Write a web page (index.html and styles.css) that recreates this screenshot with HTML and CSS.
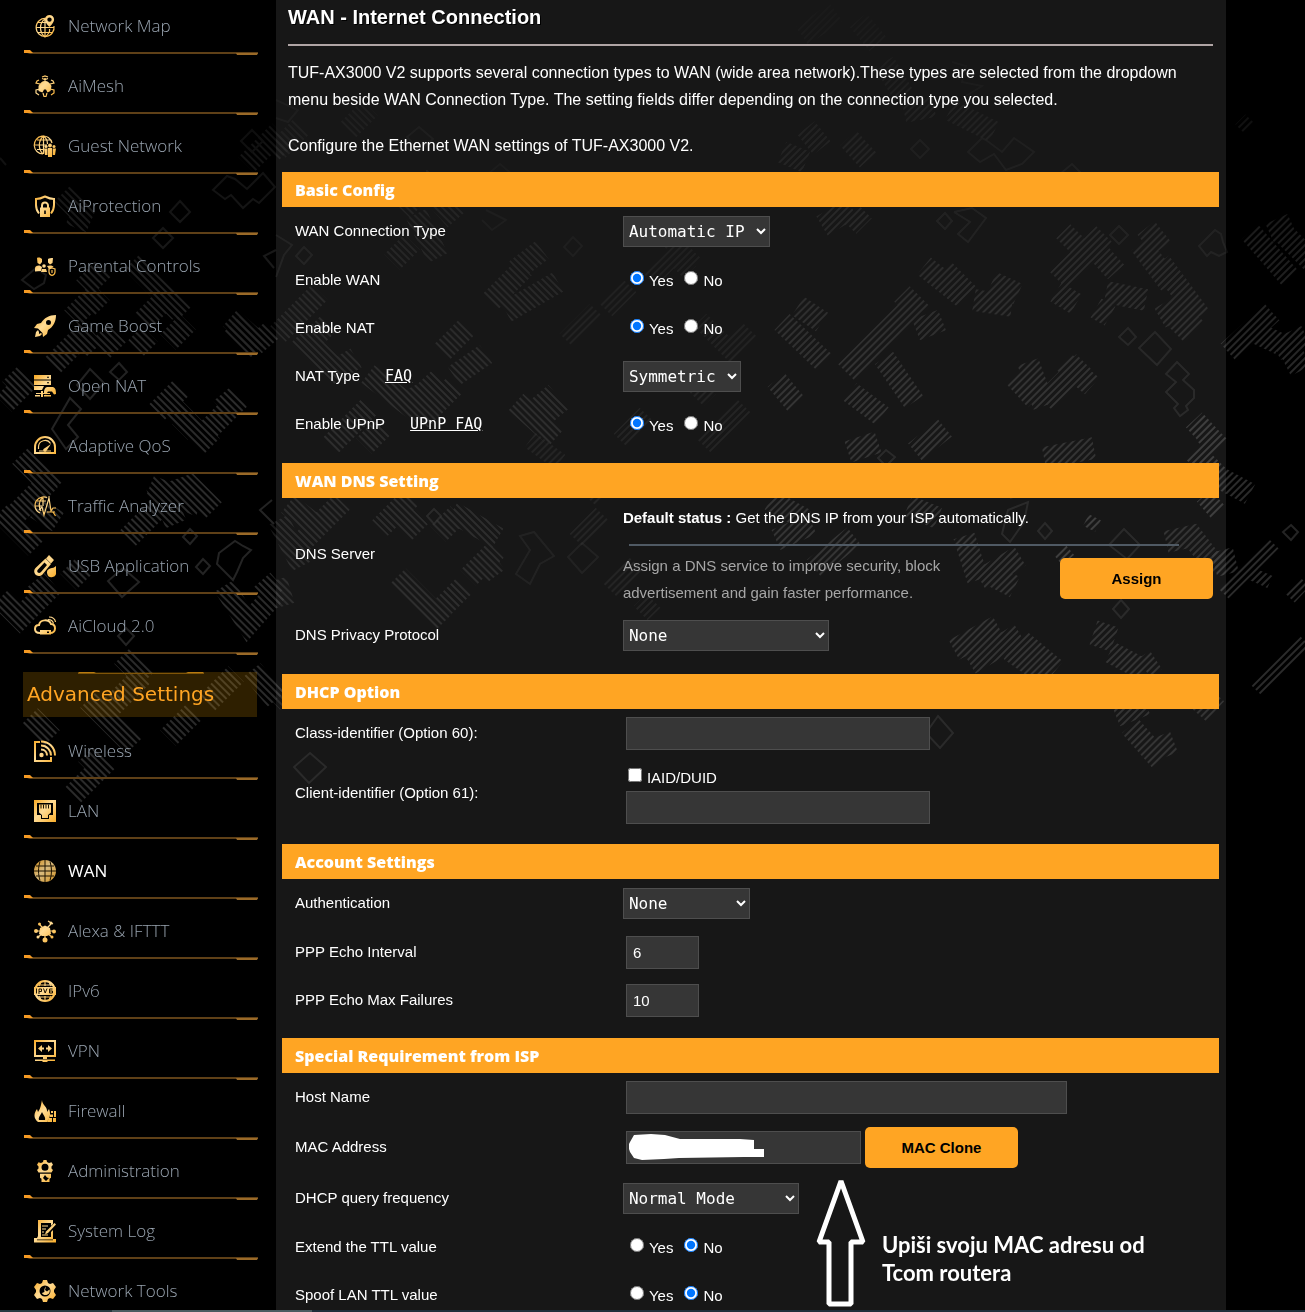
FILE: index.html
```html
<!DOCTYPE html>
<html lang="en">
<head>
  <meta charset="UTF-8">
  <title>ASUS Wireless Router TUF-AX3000 V2 - Internet Connection</title>
  <link rel="stylesheet" href="styles.css">
</head>
<body>
  <!-- camo background + shared icon gradient -->
  <svg class="camo" width="1305" height="1312" aria-hidden="true">
    <defs>
      <linearGradient id="gold" gradientUnits="userSpaceOnUse" x1="0" y1="0" x2="22" y2="22">
        <stop offset="0" stop-color="#f7a823"/>
        <stop offset="0.45" stop-color="#ffdc96"/>
        <stop offset="1" stop-color="#f9ae2b"/>
      </linearGradient>
      <pattern id="back" width="5" height="5" patternUnits="userSpaceOnUse" patternTransform="rotate(-45)">
        <rect width="2" height="5" fill="#2b2b2b"/>
      </pattern>
      <pattern id="fwd" width="5" height="5" patternUnits="userSpaceOnUse" patternTransform="rotate(45)">
        <rect width="2" height="5" fill="#2b2b2b"/>
      </pattern>
      <linearGradient id="fade" x1="0" y1="0" x2="0" y2="1">
        <stop offset="0" stop-color="#fff" stop-opacity="0.1"/>
        <stop offset="0.3" stop-color="#fff"/>
      </linearGradient>
      <mask id="top-fade" maskUnits="userSpaceOnUse" x="0" y="0" width="1305" height="1312">
        <rect width="1305" height="1312" fill="url(#fade)"/>
      </mask>
    </defs>
    <g mask="url(#top-fade)" fill="none">
      <g stroke="url(#back)" stroke-width="22">
        <path d="M62 194l20 20-6 14M72 318l20-20 10 10M84 288l20-20M132 262l52 52M142 322l24-24 14 14M232 324l26 26M246 165l26-26 14 14"/>
        <path d="M4 404l18-18-12-12M52 366l30-30 12 14M100 332l18 18M136 348l14-14M168 342l20-20M230 318l30 26M256 330l14 16"/>
        <path d="M157 412l24-24M166 400l46 46M180 432l14-14M206 432l26-26-10-12"/>
        <path d="M20 456l34 34M16 514l34-34M0 512l36 36M36 508l22 14M150 486l50 20M128 538l38-38 10 24M150 500l40-14 24 24M68 566l16 16"/>
        <path d="M0 598l20 20 26-26-10-12M224 586l24 38 28-32M262 580l14 16M122 656l24 24M88 700l46 46M112 706l30-30M30 716l22 22M72 796l28-28-14-14M168 738l26-26M206 704l30-30M252 670l24 30"/>
      </g>
      <g stroke="url(#back)" stroke-width="22" opacity="0.6">
        <path d="M278 150l24-24M348 130l22-22M402 210l34-34M416 214l22 44M392 262l20-20M438 200l18 20M490 302l34-34M506 312l52-30M516 270l26-20"/>
        <path d="M278 334l42-42M306 346l22-22M300 334l36 36 20-12M368 374l42 32 30-28M410 388l16 30M442 352l24-24M454 376l32-22M330 446l40-40M364 446l18-18M420 420l34-34M516 402l40 36M540 392l20 24"/>
        <path d="M278 520l24 46M300 544l42-42M288 504l28 22M380 528l30-30M396 508l24 24M438 534l20-20M452 512l46 26M398 576l46 46M444 606l20-20M468 578l28-28M484 560l12 16M276 580l8 26M276 690l12 12"/>
      </g>
      <g stroke="url(#fwd)" stroke-width="18" opacity="0.35">
        <path d="M590 500l20-20M576 540l26-26M610 590l26-26M566 340l30-30M606 310l24-24M620 440l26-26M530 440l30 22M650 280l24-24 16 16M670 240l24 24M704 446l40-40M640 600l14 14M700 320l30 30 20-20M690 380l20 20"/>
      </g>
      <g stroke="url(#fwd)" stroke-width="22" opacity="0.75">
        <path d="M802 36l34-24M858 20l20 24M884 62l20 34M904 112l30-6M950 110l44 22M782 152l24 10M806 128l16 20M848 138l20 22M822 226l30-18M852 214l12 12"/>
        <path d="M924 266l40 32M944 270l24 24M974 300l38 6M992 282l26 12M782 322l42 40M798 306l24 16M846 372l60-60M902 294l20 20M884 358l30 44M916 330l26-10M850 392l32 24M776 380l20 24"/>
        <path d="M1014 376l22 24M1028 362l16 44M1044 402l40-40M1064 362l28 24M1058 280l46-46M1056 292l20 12M1064 246l14-14M1098 252l18 20M1096 308l14 8M1106 292l40 8M1146 228l16 20M1140 244l30 40M1160 262l40 54M1160 318l24-14M1176 334l20-20"/>
        <path d="M776 540l36-16M770 500l36 20M814 568l40-32M848 452l30-10M908 506l30 12M915 452l30-24M1044 458l50-10M1166 542l26-6 26 34M964 536l14 44M980 580l40-24M1000 592l10-20"/>
        <path d="M954 650l44-24M970 664l50-30M1010 650l36 26M1020 640l36 30M1108 624l-8 24M1110 652l34 18M1144 668l12-8M1116 716l30-12M1130 726l30 34M1198 714l18-20M1148 752l26-10"/>
      </g>
      <g stroke="url(#fwd)" stroke-width="22">
        <path d="M1250 232l40 46M1270 234l22-10M1282 232l30 30M1228 352l44-40M1250 330l30 14M1276 350l30-14M1286 366l20-10M1194 420l24 26M1204 448l16-16M1194 452l26 26 30 16M1204 510l14-12M1222 550l6 24"/>
      </g>
      <g stroke="url(#fwd)" stroke-width="13">
        <path d="M1224 594l50-50M1252 574l18 8M1290 598l15-16M1256 690l49-49M1240 129l10-10M1086 520l12 6M1058 560l12-10"/>
      </g>
      <g stroke="#242424" stroke-width="2">
        <path d="M252 130l11 11-11 11-11-11zM180 201l10 11-10 10-10-10zM163 228l10 10-10 10-10-10zM119 363l8 9-8 8-9-8zM90 369l14 14-14 16-13-14zM70 398l11 11-13 16 10 12-12 12-14-20zM190 529l7 7-7 8-7-7zM203 559l7 7-7 8-7-7zM123 568l16 14-17 15-14-16zM126 628l8 8-8 9-8-9zM1291 525l7 7-7 8-8-8z"/>
        <path d="M213 190l14-14 8 3 12 10 16-16 12 14-16 16-6-4-10 9-12-13-6 4zM36 268l10 7-2 8-10 6-12-9zM276 250l-12 6 10 12M219 553l16-12 8 5 8 4-8 8-6 14-4 8-16-16zM272 500l-12 10 14 14M0 158l6 7"/>
      </g>
      <g stroke="#242424" stroke-width="2" opacity="0.6">
        <path d="M310 753l16 14-17 16-15-16zM434 509l7 7-7 8-7-8zM304 247l8 8-8 9-8-8zM419 127l14 12-14 12-12-14zM276 100l22 10-10 12-12-4M276 235l16 10-8 10-8 22"/>
        <path d="M582 543l16 14-16 16-14-16zM573 237l9 9-9 10-9-9zM520 536l14-4 20 24-14 8-10 20-14-10 14-24zM486 210l20 10-14 10-10-10M500 164l14 12-14 10-12-12z" opacity="0.6"/>
        <path d="M920 140l9 9-9 9-9-9zM945 213l7 8-7 8-8-8zM1119 226l9 9-9 9-9-9zM1128 328l8 9-8 8-9-8zM1155 332l16 17-14 16-18-17zM1177 362l12 12-6 6 11 10v8l-8 8 2 4-8 6-6-8 4-4-12-12 10-10-10-8zM1045 523l7 8-7 8-7-8zM1124 529l16 16-13 14-18-14zM1121 600l8 9-8 9-8-9zM938 716l15 17-13 15-14-15zM886 450l9 7-9 9-8-8z"/>
        <path d="M968 152l14-14 4 2 16 12 12-14 20 14-12 12-16 6-12-16-14 8zM954 212l18-4 14 10-18 24-10-8 12-12-16-10M1199 246l16-16 6 4 2 8 4 10-8 4-8-4-4 4zM1008 510l20-8-4 20-14 20-8-8zM1060 174l12-10 12 12M952 62l14 4-4 16 20 4-16 10M1010 498l18-6"/>
      </g>
    </g>
  </svg>

  <div class="page">
    <nav class="sidebar">
      <ul class="menu">
        <li><a href="#"><svg class="icon" viewBox="0 0 22 22"><g class="ln"><path d="M12 3.500A9 9 0 1 0 20 11"/><path d="M11 4C5 8 5 17 11 22C15 19 16 16 15.500 14M2 12.500h18M4 7.500h9M4 17.500h14M11 3.500V22"/></g><path d="M15.500 0a4.600 4.600 0 0 0-4.600 4.600c0 3 4.600 7.500 4.600 7.500s4.600-4.500 4.600-7.500A4.600 4.600 0 0 0 15.500 0zm0 2.400a2.200 2.200 0 1 1 0 4.400 2.200 2.200 0 0 1 0-4.400z" fill-rule="evenodd"/></svg>Network Map</a></li>
        <li><a href="#"><svg class="icon" viewBox="0 0 22 22"><path d="M11 6c3 0 5 2 6.500 5l-1 5-3 1.500-1.500-3h-2l-1.500 3-4-1.500v-5C6 8 8 6 11 6z"/><g class="ln"><path d="M11 3v4M8 2l3-1 3 1M8 3.500l3 1 3-1M6 9L2 8l1-2 2-1M16 9l4-1-1-2-2-1M6 14l-4 1v3l3 2M16 14l4 1v3l-3 2M9 18l1 3.500h2l1-3.500"/></g></svg>AiMesh</a></li>
        <li><a href="#"><svg class="icon" viewBox="0 0 22 22"><g class="ln"><path d="M18 8A9 9 0 1 0 9 19M9.500 1C4 6 4 14 9 19M9.500 1c4 3 4 6 4 8M1 10h12M3 5h14M3 14.500h6M9.500 1v18"/></g><circle cx="12" cy="11.500" r="1.600"/><circle cx="16" cy="10.500" r="1.900"/><circle cx="20" cy="11.500" r="1.500"/><path d="M10 13.500h3.500V20h-2.500zM14 13h4v9h-4zM18.700 13.500H22L21 20h-2.300z"/></svg>Guest Network</a></li>
        <li><a href="#"><svg class="icon" viewBox="0 0 22 22"><path class="ln2" d="M5 18.500C3 16 2 13 2 10V4c3 0 6-1 9-2.500C14 3 17 4 20 4v6c0 3-1 6-3 8.500"/><path class="ln2" d="M8 13v-2.500a3 3 0 0 1 6 0V13"/><path d="M6 12.500h10V22H6zM10.200 15.500v3.500h1.600v-3.500z" fill-rule="evenodd"/></svg>AiProtection</a></li>
        <li><a href="#"><svg class="icon" viewBox="0 0 22 22"><path d="M3 3c2-1 4 0 5 1v3L6 9.500 3.500 8zM14 4c1-1 3-1 5-1l-.5 5-2.500 1.500-2-2zM1 14c0-3 2-3.500 4.500-3.500L8 12l-1 4-6 .5zM13 11l3-.5c2 0 3 .5 3.500 1.500L15 14z"/><circle cx="10" cy="11" r="1.800"/><path d="M7 17l1-3h4l1 3z"/><path class="ln" d="M18 13l3 1v3c0 2-1.500 3-3 3.500-1.500-.5-3-1.500-3-3.500v-3zM18 15v3"/></svg>Parental Controls</a></li>
        <li><a href="#"><svg class="icon" viewBox="0 0 22 22"><path fill-rule="evenodd" d="M22 0c-7 0-12 3-15 8l-4 1-3 4 4 .5 4.500 4.500.5 4 4-3 1-4c5-3 8-8 8-15zM14.500 5a2.500 2.500 0 1 1 0 5 2.500 2.500 0 0 1 0-5z"/><path d="M4 15l-2 2-1 5 5-1 2-2-1-1-2 1v-2z"/></svg>Game Boost</a></li>
        <li><a href="#"><svg class="icon" viewBox="0 0 22 22"><path fill-rule="evenodd" d="M0 0h17v4.500H0zM13 1.700h2v1h-2zM0 5.500h17V10H0zM13 7.200h2v1h-2zM0 11h10l-2 4H0zM7 16h2v2h7v1H9v3H7v-3H2v-1h5z"/><path d="M10 18c0-5 2-6 4-6h4c3 0 4 2 4 7l-2 .5-2-3h-4l-2 3z"/><path d="M1 20h5v1.500H1zM10 20h7v1.500h-7z"/></svg>Open NAT</a></li>
        <li><a href="#"><svg class="icon" viewBox="0 0 22 22"><path class="ln2" d="M1 18v-6a10 10 0 0 1 20 0v6z"/><path class="ln" d="M4.500 14v-2a6.500 6.500 0 0 1 12-3.500M5 16h12"/><path d="M17 9l-5 7.500c-2 1-3.500-1-2.500-2.500z"/></svg>Adaptive QoS</a></li>
        <li><a href="#"><svg class="icon" viewBox="0 0 22 22"><g class="ln"><path d="M13 2.500C8 .5 1 4 1 10.500c0 3 2 6 5 7.500M9 2C4.500 6 4.500 12 7 16M9 2v9M3 6h9M1 11h7M14 2h2M19 17l2.500 4"/><path d="M5 15l3-3 2 8 5-17 2 13 2-3h3M13 17h8"/></g></svg>Traffic Analyzer</a></li>
        <li><a href="#"><svg class="icon" viewBox="0 0 22 22"><path fill-rule="evenodd" d="M15 0l5 5-3 3.500-5-5zM11.500 3.500l5.500 5.500-8.500 10.500c-5 4.500-11-2-7-6.500zM4 14.500c-2 2 .5 5 3 2.500l6-7-2.500-2.500z"/><path d="M22 11v6a4.500 4.500 0 1 1-6-3.500c3-.5 4-1 6-2.500z"/></svg>USB Application</a></li>
        <li><a href="#"><svg class="icon" viewBox="0 0 22 22"><path class="ln2" d="M6 18c-3 0-5-1-5-4s2-4 4-4c1-6 10-6 12-1 3 0 4 2 4 4.500S19 18 16 18"/><path fill-rule="evenodd" d="M6 15h11v4.500H6zM13 16.500h2v1.500h-2z"/><path class="ln" d="M14 4.500c3 0 5 2 5.500 4M15 2c4 0 6 2 6.500 5"/></svg>AiCloud 2.0</a></li>
      </ul>
      <h2 class="menu-title">Advanced Settings</h2>
      <ul class="menu">
        <li><a href="#"><svg class="icon" viewBox="0 0 22 22"><path class="ln2" d="M6 2H1v19h16v-4"/><path class="ln2" d="M7 1.500c8 0 14 6 14 14M7 5.500c6 0 10 5 10 10M7 9.500c4 0 6 3 6 6"/><circle cx="7.500" cy="15" r="2.200"/></svg>Wireless</a></li>
        <li><a href="#"><svg class="icon" viewBox="0 0 22 22"><path fill-rule="evenodd" d="M0 0h22v22H0zM3 3v12h4v4h8v-4h4V3z"/><path d="M5 4.500h12v8l-3 2.500v3H8v-3l-3-2.500z"/><path d="M7 4.500v4M9.500 4.500v4M12 4.500v4M14.500 4.500v4" class="dark"/></svg>LAN</a></li>
        <li class="active"><a href="#"><svg class="icon" viewBox="0 0 22 22"><circle cx="11" cy="11" r="11" opacity="0.85"/><path class="dark" d="M11 0v22M6 1.500C4 8 4 14 6 20.500M16 1.500c2 6.500 2 12.500 0 19M0 11h22M2 6h18M2 16h18"/></svg>WAN</a></li>
        <li><a href="#"><svg class="icon" viewBox="0 0 22 22"><path d="M6 8l5-2.500L16 8l1 6-4 2H8l-3-2z"/><path class="ln" d="M5 4l4 4M17 4l-4 4M2 11h5M15 11h5M4 17l4-3M18 17l-4-3M11 14v6M14 1l5 3"/><circle cx="5.500" cy="4" r="1.500"/><circle cx="2" cy="11" r="2"/><circle cx="20" cy="11.500" r="2"/><circle cx="4" cy="17" r="1.500"/><circle cx="18" cy="17" r="1.500"/><circle cx="11" cy="20" r="2.500"/><circle cx="17" cy="3" r="1.500"/></svg>Alexa &amp; IFTTT</a></li>
        <li><a href="#"><svg class="icon" viewBox="0 0 22 22"><circle class="ln2" cx="11" cy="11" r="10"/><path class="ln" d="M11 1v5M11 16v5M7 2L5 6M15 2l2 4M5 16l2 4M17 16l-2 4M2 5h18M3 17h16"/><path d="M0 7h22v8H0z"/><path class="dark" d="M2.500 8.500v5M5 14V9h2.500v2.500H5M9.500 8.500l1.700 4.500L13 8.500M18.500 9H15.500v4h3v-2h-3"/></svg>IPv6</a></li>
        <li><a href="#"><svg class="icon" viewBox="0 0 22 22"><path class="ln2" d="M1 1h20v15H1z"/><path d="M4 8.500L8 5v2.500h2v2H8V12zM18 8.500L14 5v2.500h-2v2h2V12zM9 16h4v3H9zM1 19.500h20v1.500H14l-1 1H9l-1-1H1z"/></svg>VPN</a></li>
        <li><a href="#"><svg class="icon" viewBox="0 0 22 22"><path fill-rule="evenodd" d="M8 0c0 5 6 7 5 12l2-3c2 5 1 9-2 13H4C-1 18 0 13 3 9l1 3C7 8 7 4 8 0zM8 12c-1 3-4 5-3 8h6c1-3-2-5-3-8z"/><path d="M15 18h3v4h-5zM19 18h3v4h-3zM16 14.500h3v2.500h-3zM20 11h2v6h-2zM17 11h2v2h-2z"/></svg>Firewall</a></li>
        <li><a href="#"><svg class="icon" viewBox="0 0 22 22"><path fill-rule="evenodd" d="M9.500 0h3l.5 2 2 1 2.500-.8 1.500 2.600L17.500 6.500v2l1.500 1.500L17.500 12.500h-13L3 10l1.500-1.500v-2L3 4.800l1.500-2.600L7 3l2-1zM11 3.700a3.500 3.500 0 1 0 0 7 3.500 3.500 0 0 0 0-7z"/><path fill-rule="evenodd" d="M6 13.800h11v4l-1.500 1V22h-8v-3.200l-1.500-1zM11 15l-2 3 3 3 3-3-2-.5z"/></svg>Administration</a></li>
        <li><a href="#"><svg class="icon" viewBox="0 0 22 22"><path fill-rule="evenodd" d="M4 0h15v4l-2 2V3H7v14h10v-5l2-2v9h3v3.500H0V18h3l1-2zM3 19.500h16v.8H3z"/><path d="M20.500 3l1.500 1.500-8 8.500-3 1.500 1-3z"/><path class="ln" d="M8 6h6M8 9h4M8 12h2M8 15h6"/></svg>System Log</a></li>
        <li><a href="#"><svg class="icon" viewBox="0 0 22 22"><path fill-rule="evenodd" d="M9 0h4l1 3 2 1 3-1 3 4-2 3v2l2 3-3 4-3-1-2 1-1 3H9l-1-3-2-1-3 1-3-4 2-3v-2L0 7l3-4 3 1 2-1zM11 5.500a5.500 5.500 0 1 0 0 11 5.500 5.500 0 0 0 0-11z"/><path d="M12 6.500l-1 3.500 2 1.500 2.500-2c1 3-1 5.500-4 5.500-1.500 0-3-.5-3.500-2l2.500-1c-.5-2 0-4 1.500-5.500z"/></svg>Network Tools</a></li>
      </ul>
    </nav>

    <main class="content">
      <div class="intro">
        <h1>WAN - Internet Connection</h1>
        <hr>
        <p>TUF-AX3000 V2 supports several connection types to WAN (wide area network).These types are selected from the dropdown menu beside WAN Connection Type. The setting fields differ depending on the connection type you selected.</p>
        <p>Configure the Ethernet WAN settings of TUF-AX3000 V2.</p>
      </div>

      <table class="form-table">
        <colgroup><col class="col-label"><col></colgroup>
        <thead><tr><th colspan="2">Basic Config</th></tr></thead>
        <tbody>
          <tr class="row-select">
            <th><label for="wan-type">WAN Connection Type</label></th>
            <td><select id="wan-type" class="w-type"><option>Automatic IP</option><option>Static IP</option><option>PPPoE</option></select></td>
          </tr>
          <tr>
            <th>Enable WAN</th>
            <td class="radios"><label><input type="radio" name="wan" checked>Yes</label><label><input type="radio" name="wan">No</label></td>
          </tr>
          <tr>
            <th>Enable NAT</th>
            <td class="radios"><label><input type="radio" name="nat" checked>Yes</label><label><input type="radio" name="nat">No</label></td>
          </tr>
          <tr class="row-select">
            <th><label for="nat-type">NAT Type</label><a class="faq" href="#">FAQ</a></th>
            <td><select id="nat-type" class="w-nat"><option>Symmetric</option><option>Full Cone</option></select></td>
          </tr>
          <tr>
            <th>Enable UPnP<a class="faq" href="#">UPnP FAQ</a></th>
            <td class="radios"><label><input type="radio" name="upnp" checked>Yes</label><label><input type="radio" name="upnp">No</label></td>
          </tr>
        </tbody>
      </table>

      <table class="form-table">
        <colgroup><col class="col-label"><col></colgroup>
        <thead><tr><th colspan="2">WAN DNS Setting</th></tr></thead>
        <tbody>
          <tr class="row-dns">
            <th>DNS Server</th>
            <td>
              <p class="dns-status"><b>Default status :</b> Get the DNS IP from your ISP automatically.</p>
              <hr>
              <div class="dns-assign">
                <p>Assign a DNS service to improve security, block advertisement and gain faster performance.</p>
                <button type="button" class="btn">Assign</button>
              </div>
            </td>
          </tr>
          <tr class="row-select">
            <th><label for="dns-priv">DNS Privacy Protocol</label></th>
            <td><select id="dns-priv" class="w-dns"><option>None</option><option>DNS-over-TLS (DoT)</option></select></td>
          </tr>
        </tbody>
      </table>

      <table class="form-table">
        <colgroup><col class="col-label"><col></colgroup>
        <thead><tr><th colspan="2">DHCP Option</th></tr></thead>
        <tbody>
          <tr>
            <th><label for="opt60">Class-identifier (Option 60):</label></th>
            <td><input type="text" id="opt60" class="w-mid"></td>
          </tr>
          <tr class="row-client">
            <th><label for="opt61">Client-identifier (Option 61):</label></th>
            <td><label class="check"><input type="checkbox">IAID/DUID</label><input type="text" id="opt61" class="w-mid"></td>
          </tr>
        </tbody>
      </table>

      <table class="form-table">
        <colgroup><col class="col-label"><col></colgroup>
        <thead><tr><th colspan="2">Account Settings</th></tr></thead>
        <tbody>
          <tr class="row-select">
            <th><label for="auth">Authentication</label></th>
            <td><select id="auth" class="w-auth"><option>None</option><option>802.1x MD5</option></select></td>
          </tr>
          <tr>
            <th><label for="echo-int">PPP Echo Interval</label></th>
            <td><input type="text" id="echo-int" class="w-short" value="6"></td>
          </tr>
          <tr>
            <th><label for="echo-max">PPP Echo Max Failures</label></th>
            <td><input type="text" id="echo-max" class="w-short" value="10"></td>
          </tr>
        </tbody>
      </table>

      <table class="form-table">
        <colgroup><col class="col-label"><col></colgroup>
        <thead><tr><th colspan="2">Special Requirement from ISP</th></tr></thead>
        <tbody>
          <tr>
            <th><label for="host">Host Name</label></th>
            <td><input type="text" id="host" class="w-long"></td>
          </tr>
          <tr class="row-mac">
            <th><label for="mac">MAC Address</label></th>
            <td>
              <div class="mac">
                <input type="text" id="mac" class="w-mac">
                <button type="button" class="btn">MAC Clone</button>
                <svg class="scribble" viewBox="0 0 137 27" aria-hidden="true"><path d="M1 8L5 1 22 0l14 1 15 4 20 0 40 0 14 1 0 9 10 0v8h-20l-65 1-15 1-22 1-8-2-4-6-1-3-2-1z" fill="#fff"/></svg>
                <div class="note">
                  <svg viewBox="0 0 50 130" aria-hidden="true"><path d="M25 3L3 64h10v62h22V64h12z" fill="none" stroke="#fff" stroke-width="5" stroke-linejoin="bevel"/></svg>
                  <p>Upiši svoju MAC adresu od Tcom routera</p>
                </div>
              </div>
            </td>
          </tr>
          <tr class="row-select">
            <th><label for="dhcp-q">DHCP query frequency</label></th>
            <td><select id="dhcp-q" class="w-query"><option>Normal Mode</option><option>Aggressive Mode</option></select></td>
          </tr>
          <tr>
            <th>Extend the TTL value</th>
            <td class="radios"><label><input type="radio" name="ttl">Yes</label><label><input type="radio" name="ttl" checked>No</label></td>
          </tr>
          <tr>
            <th>Spoof LAN TTL value</th>
            <td class="radios"><label><input type="radio" name="spoof">Yes</label><label><input type="radio" name="spoof" checked>No</label></td>
          </tr>
        </tbody>
      </table>
    </main>
  </div>
  <div class="bottom-edge"></div>
</body>
</html>
```
FILE: styles.css
```css
* {
  box-sizing: border-box;
}

body {
  margin: 0;
  background-color: #000;
  color: #fff;
  font-family: "Liberation Sans", Arial, sans-serif;
  font-size: 15px;
}

p, h1, h2, ul {
  margin: 0;
  padding: 0;
}

.camo {
  position: absolute;
  left: 0;
  top: 0;
  z-index: -1;
}

.page {
  display: flex;
  height: 100vh;
  padding-right: 79px;
  overflow: hidden;
}

/* Left menu */
.sidebar {
  flex: none;
  width: 276px;
  padding: 0 18px 0 23px;
}

.menu {
  list-style: none;
}

.menu:first-child {
  margin-top: -4px;
}

.menu li {
  height: 60px;
  padding-left: 1px;
  background: url("data:image/svg+xml,%3Csvg xmlns='http://www.w3.org/2000/svg' width='234' height='5'%3E%3Cpath d='M0 2h234v2H6z' fill='%235f4017'/%3E%3Cpath d='M0 0h6l3 3H0z' fill='%23f59a23'/%3E%3Cpath d='M212 3h22l-1 2h-20z' fill='%239a6a28'/%3E%3C/svg%3E") no-repeat 1px 54px;
}

.menu a {
  display: flex;
  align-items: center;
  gap: 12px;
  height: 59px;
  padding-left: 10px;
  color: #99a4b0;
  font-family: "Open Sans", "Segoe UI", sans-serif;
  font-size: 17px;
  font-weight: 300;
  line-height: 22px;
  text-decoration: none;
}

.menu .active a {
  color: #fff;
  font-weight: 400;
}

.icon {
  flex: none;
  width: 22px;
  height: 22px;
  fill: url(#gold);
  overflow: visible;
}

.icon .ln,
.icon .ln2 {
  fill: none;
  stroke: url(#gold);
  stroke-width: 1.2;
}

.icon .ln2 {
  stroke-width: 2;
}

.icon .dark {
  fill: none;
  stroke: #1c1200;
  stroke-width: 1;
}

.menu-title {
  height: 45px;
  margin: 16px 1px 4px 0;
  padding-left: 4px;
  background: rgba(255, 170, 0, 0.18) url("data:image/svg+xml,%3Csvg xmlns='http://www.w3.org/2000/svg' width='126' height='2'%3E%3Cpath d='M0 1h126v1H0z' fill='%23805508'/%3E%3Cpath d='M1 0h15l2 1H0zM110 0h15l1 1h-18z' fill='%23b87b10'/%3E%3C/svg%3E") no-repeat 55px 0;
  color: #ffa523;
  font-family: "DejaVu Sans", Verdana, sans-serif;
  font-size: 20px;
  font-weight: 400;
  line-height: 45px;
}

/* Content panel */
.content {
  flex: 1;
  min-width: 0;
  padding: 4px 7px 0 6px;
  background-color: rgba(255, 255, 255, 0.09);
}

.intro {
  padding: 0 6px 13px;
  font-size: 16px;
  line-height: 27px;
}

.intro h1 {
  font-size: 20px;
  text-shadow: 1px 1px 0 #000;
}

.intro hr {
  height: 2px;
  margin: 13px 0 13px;
  border: none;
  background-color: #b0a5a5;
}

.intro p + p {
  margin-top: 19px;
}

.form-table {
  width: 100%;
  margin-bottom: 14px;
  border-collapse: collapse;
  table-layout: fixed;
}

.col-label {
  width: 35%;
}

.form-table thead th {
  height: 35px;
  padding: 0 13px;
  background-color: #ffa523;
  font-family: "Open Sans", "Arial Black", sans-serif;
  font-size: 16px;
  font-weight: 800;
  line-height: 20px;
  text-align: left;
}

.form-table tbody th {
  padding: 0 13px 2px;
  font-weight: 400;
  text-align: left;
}

.form-table td {
  height: 48px;
  padding: 0 0 0 13px;
}

.form-table .row-select td {
  height: 49px;
}

.faq {
  margin-left: 25px;
  color: #fff;
  font-family: "DejaVu Sans Mono", "Lucida Console", monospace;
  font-size: 15px;
}

select {
  height: 31px;
  padding: 0 3px 0 1px;
  border: 1px solid #4e4e4e;
  border-radius: 0;
  background-color: #363636;
  color: #fff;
  font-family: "DejaVu Sans Mono", "Lucida Console", monospace;
  font-size: 16px;
  vertical-align: middle;
}

input[type="text"] {
  height: 33px;
  margin: 0 0 0 3px;
  padding: 0 6px;
  border: 1px solid #4e4e4e;
  background-color: #363636;
  color: #fff;
  font-family: inherit;
  font-size: 15px;
  vertical-align: middle;
}

.w-type { width: 147px; }
.w-nat { width: 118px; }
.w-dns { width: 206px; }
.w-auth { width: 127px; }
.w-query { width: 176px; }
.w-mid { width: 304px; }
.w-short { width: 73px; }
.w-long { width: 441px; }
.w-mac { width: 235px; }

.radios label {
  margin-right: 4px;
}

input[type="radio"],
input[type="checkbox"] {
  width: 14px;
  height: 14px;
  margin: 0 5px 0 7px;
  vertical-align: 1px;
}

input[type="checkbox"] {
  margin-left: 5px;
}

.btn {
  flex: none;
  width: 153px;
  height: 41px;
  border: none;
  border-radius: 5px;
  background-color: #ffa523;
  color: #000;
  font-family: inherit;
  font-size: 15px;
  font-weight: 700;
}

/* DNS server row */
.form-table .row-dns td {
  height: 113px;
  line-height: 27px;
}

.row-dns hr {
  height: 2px;
  margin: 13px 40px 6px 6px;
  border: none;
  background-color: #505a64;
}

.dns-assign {
  display: flex;
  align-items: center;
  justify-content: space-between;
  padding-right: 6px;
}

.dns-assign p {
  max-width: 340px;
  color: #a6a6a6;
}

.form-table .row-client td {
  height: 73px;
}

.check {
  display: block;
  line-height: 27px;
}

/* MAC address row */
.form-table .row-mac td {
  height: 53px;
}

.mac {
  display: flex;
  align-items: center;
  gap: 4px;
  position: relative;
}

.scribble {
  position: absolute;
  left: 6px;
  top: 7px;
  width: 137px;
}

.note {
  display: flex;
  gap: 16px;
  position: absolute;
  left: 193px;
  top: 51px;
  width: 340px;
  font-family: Lato, Calibri, sans-serif;
  font-size: 22px;
  font-weight: 700;
  line-height: 28px;
  pointer-events: none;
}

.note svg {
  flex: none;
  width: 50px;
  height: 130px;
}

.note p {
  padding-top: 53px;
}

.bottom-edge {
  position: fixed;
  left: 0;
  right: 0;
  bottom: 0;
  height: 2px;
  background: linear-gradient(90deg, #263940 112px, #4a5b60 112px, #4a5b60 312px, #1f2e3a 312px);
}
```
